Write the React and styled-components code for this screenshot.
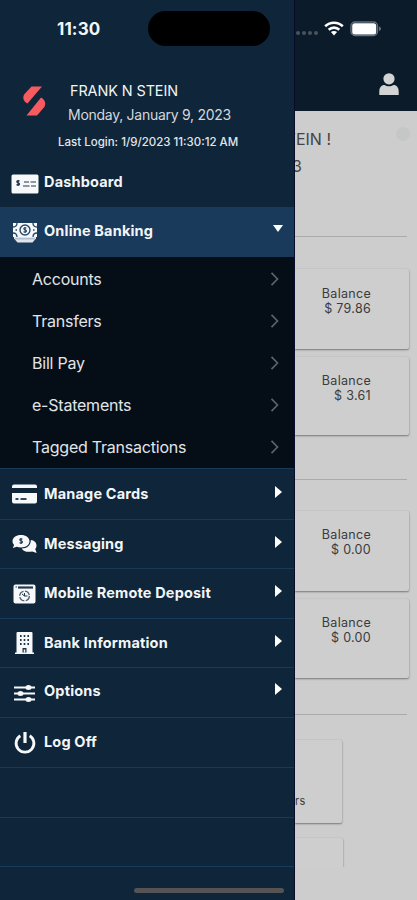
import React from "react";
import styled, { createGlobalStyle } from "styled-components";

const Global = createGlobalStyle`
  * { box-sizing: border-box; }
  body { margin: 0; background: #cdcdcd; font-family: Inter, "Liberation Sans", sans-serif; }
`;

const Screen = styled.div`
  position: relative;
  display: grid;
  grid-template-columns: 295px 1fr;
  width: 417px;
  height: 900px;
  overflow: hidden;
`;

const Drawer = styled.aside`
  display: flex;
  flex-direction: column;
  background: #0e253a;
  border-right: 1px solid #090b2b;
  color: #f3f5f7;
  min-width: 0;
  overflow: hidden;
`;

const StatusBar = styled.div`
  display: flex;
  align-items: flex-start;
  height: 78px;
  padding: 11px 0 0 57px;
`;

const Clock = styled.time`
  width: 91px;
  font-size: 17px;
  font-weight: 700;
  line-height: 36px;
  letter-spacing: 0.1px;
`;

const Island = styled.div`
  flex: none;
  width: 122px;
  height: 35px;
  border-radius: 18px;
  background: #000;
`;

const Profile = styled.header`
  display: grid;
  grid-template-columns: 68px 1fr;
  height: 51px;
`;

const LogoBox = styled.div`
  padding: 8px 0 0 23px;
  svg { display: block; }
`;

const ProfileText = styled.div`
  display: flex;
  flex-direction: column;
  white-space: nowrap;
`;

const UserName = styled.div`
  padding: 1px 0 0 2px;
  font-size: 14.4px;
  line-height: 24px;
  letter-spacing: -0.08px;
`;

const Today = styled.div`
  font-size: 14px;
  line-height: 23px;
  color: #d3d8dd;
  letter-spacing: -0.27px;
`;

const LastLogin = styled.div`
  height: 29px;
  padding-left: 58px;
  font-size: 11.5px;
  font-weight: 500;
  line-height: 27px;
  white-space: nowrap;
  color: #e2e6e9;
`;

const MenuRow = styled.div`
  flex: none;
  display: grid;
  grid-template-columns: 44px 1fr 24px;
  align-items: center;
  height: ${(p) => p.$h || 49}px;
  padding-bottom: ${(p) => p.$lift || 0}px;
  background: ${(p) => (p.$active ? "#193a5b" : "transparent")};
  border-top: ${(p) => (p.$line ? "1px solid #183a59" : "0")};
`;

const IconCell = styled.span`
  display: flex;
  justify-content: center;
  padding: ${(p) => p.$drop || 0}px 0 0 5px;
  svg { display: block; }
`;

const MenuLabel = styled.span`
  padding-bottom: 2px;
  font-size: 14.5px;
  font-weight: 700;
  letter-spacing: 0.17px;
  white-space: nowrap;
`;

const Caret = styled.span`
  display: block;
  width: 0;
  height: 0;
  border-style: solid;
  margin-bottom: 5px;
  ${(p) =>
    p.$open
      ? "margin-left: 3px; border-width: 7px 5.5px 0; border-color: #fff transparent;"
      : "margin-left: 5px; border-width: 6px 0 6px 7px; border-color: transparent #fff;"}
`;

const SubMenu = styled.nav`
  flex: none;
  display: grid;
  grid-template-rows: repeat(5, 1fr);
  height: 211px;
  padding-top: 1px;
  background: #050e17;
`;

const SubItem = styled.div`
  display: flex;
  align-items: center;
  justify-content: space-between;
  padding: 0 14px 0 32px;
  font-size: 16px;
  color: #e2e5e7;
  letter-spacing: -0.22px;
`;

const HomeBar = styled.div`
  position: absolute;
  left: 134px;
  top: 888px;
  width: 150px;
  height: 5px;
  border-radius: 3px;
  background: #555354;
`;

const Page = styled.main`
  display: flex;
  flex-direction: column;
  min-width: 0;
  overflow: hidden;
  background: #cdcdcd;
  color: #3b3b3b;
`;

const TopBar = styled.header`
  flex: none;
  height: 111px;
  background: #0b1b29;
`;

const Signals = styled.div`
  display: flex;
  align-items: center;
  gap: 6px;
  height: 57px;
  padding-left: 1px;
  svg { display: block; }
`;

const Dots = styled.div`
  display: flex;
  gap: 2px;
  padding-top: 9px;
  i { width: 4px; height: 4px; border-radius: 2px; background: #47535e; }
`;

const UserButton = styled.div`
  display: flex;
  justify-content: flex-end;
  padding: 16px 18px 0 0;
`;

const Greeting = styled.div`
  display: grid;
  grid-template-columns: 1fr 14px;
  flex: none;
  height: 125px;
  padding: 15px 7px 0 0;
`;

const GreetingText = styled.div`
  display: flex;
  justify-content: flex-end;
  width: ${(p) => p.$w}px;
  overflow: hidden;
  white-space: nowrap;
  font-size: 16px;
  line-height: 27px;
  color: #444;
`;

const Badge = styled.span`
  width: 14px;
  height: 14px;
  margin-top: 1px;
  border-radius: 50%;
  background: #c5c7c7;
`;

const Divider = styled.hr`
  flex: none;
  width: 112px;
  height: 1px;
  margin: 0;
  border: 0;
  background: #aaa;
`;

const CardGroup = styled.section`
  flex: none;
  display: flex;
  flex-direction: column;
  gap: ${(p) => p.$gap || 8}px;
  height: ${(p) => p.$h}px;
  padding-top: ${(p) => p.$top}px;
  overflow: hidden;
`;

const Card = styled.article`
  flex: none;
  width: ${(p) => p.$w || 114}px;
  height: ${(p) => p.$h || 80}px;
  padding: ${(p) => p.$pad || 17}px 38px 0 0;
  border-radius: 0 2px 2px 0;
  background: #cecece;
  box-shadow: 0 1px 2px #777, 0 0 1px #bbb;
  text-align: right;
  font-size: 12.5px;
  line-height: 15px;
  letter-spacing: 0.3px;
`;

const Caption = styled.div`
  padding-top: 37px;
  text-align: left;
  font-size: 11px;
`;

const white = "#f6f8fa";

const Svg = ({ w, h, box, children }) => (
  <svg width={w} height={h} viewBox={box || `0 0 ${w} ${h}`} fill={white}>{children}</svg>
);

const dollar = "M3 1.1C1.8.3 0 .9.4 2c.4 1 2.6.7 2.6 2S.9 5.4 0 4.6M1.6 0v6";

const CheckIcon = () => (
  <Svg w={28} h={20}>
    <rect x=".5" y=".5" width="27" height="19" rx="1.5" />
    <g stroke="#26384a" fill="none">
      <path transform="translate(5.5 6)" d={dollar} strokeWidth="1.3" />
      <path d="M13 8h5M19.5 8h5.5M12 12h6.5M20 12h5" strokeWidth="1.2" />
    </g>
  </Svg>
);

const CashIcon = () => (
  <Svg w={26} h={21}>
    <path d="M1 1h24v14H1z" />
    <path d="M2 14h22v2.500l-3.500 4h-15l-3.500-4z" opacity=".9" />
    <path d="M3 16.800h20" stroke="#8fa1b4" strokeWidth=".8" />
    <g stroke="#27486a" fill="none">
      <circle cx="13" cy="8" r="5" strokeWidth="1.4" />
      <path transform="translate(11.5 5)" d={dollar} strokeWidth="1.1" />
      <path d="M1 5c3 0 4-1.500 4-4M21 1c0 2.500 1 4 4 4M1 11c3 0 4 1.500 4 4M21 15c0-2.500 1-4 4-4" strokeWidth="1.3" />
      <path d="M3.500 8h1.500M21 8h1.500" strokeWidth="1.500" />
    </g>
  </Svg>
);

const CardIcon = () => (
  <Svg w={25} h={20}>
    <path d="M2 .5h21q2 0 2 2V4H0V2.500Q0 .5 2 .5zM0 9h25v8.500q0 2-2 2H2q-2 0-2-2z" />
    <path d="M3.500 15h3M8.500 15h6" stroke="#34485b" strokeWidth="2" />
  </Svg>
);

const ChatIcon = () => (
  <Svg w={25} h={20}>
    <path d="M9 1c5 0 8.500 2.700 8.500 6.300S14 13.500 9 13.500c-1.600 0-3-.3-4.200-.8L.8 14l1.300-3C1 9.900.5 8.700.5 7.300.5 3.700 4 1 9 1z" />
    <path d="M18.800 6c3.500.4 5.700 2.600 5.700 5.500 0 1.500-.5 2.600-1.300 3.600l1.500 4-4.500-1.700c-4.700 1.300-9-.2-10.500-2.900 5.300 0 9.300-3.500 9.100-8.500z" />
    <path transform="translate(7.500 4)" d={dollar} fill="none" stroke="#25394c" strokeWidth="1.100" />
  </Svg>
);

const DepositIcon = () => (
  <Svg w={23} h={20}>
    <rect x=".5" y=".5" width="22" height="19" rx="2" />
    <path d="M5 3.500h15" stroke="#25394c" strokeWidth="2.200" />
    <path d="M2.500 3h1.500" stroke="#25394c" />
    <circle cx="11.500" cy="12" r="4.800" fill="none" stroke="#4a5b6a" strokeWidth="1.300" strokeDasharray="6 1.500" />
    <path d="M11.500 9v3h3M9 10l2.500 2" fill="none" stroke="#25394c" />
  </Svg>
);

const BankIcon = () => (
  <Svg w={19} h={22}>
    <path d="M2.500 0h14q1 0 1 1v19.500H19V22H0v-1.500h1.500V1q0-1 1-1z" />
    <g fill="#203448">
      {[3, 7, 11].map((y) => [5, 8.7, 12.4].map((x) => <rect key={`${x}-${y}`} x={x} y={y} width="1.600" height="2" />))}
      <path d="M7.500 16h4v4.500h-4z" />
    </g>
    <path d="M9.500 17.500v3" stroke={white} strokeWidth="1.500" />
  </Svg>
);

const SlidersIcon = () => (
  <Svg w={21} h={19}>
    <path d="M0 3.500h21M0 9.500h21M0 15.500h21" stroke={white} strokeWidth="1.800" />
    <ellipse cx="14.500" cy="3.500" rx="3" ry="2.500" />
    <ellipse cx="6.500" cy="9.500" rx="3" ry="2.500" />
    <ellipse cx="14.500" cy="15.500" rx="3" ry="2.500" />
  </Svg>
);

const PowerIcon = () => (
  <Svg w={22} h={22}>
    <g fill="none" stroke={white} strokeWidth="2.800">
      <path d="M6.300 3.700a8.900 8.900 0 1 0 9.400 0" />
      <path d="M11 0v11" strokeWidth="3.200" />
    </g>
  </Svg>
);

const LogoIcon = () => (
  <svg width="23" height="30" viewBox="0 0 23 30" fill="#f75a5f">
    <path d="M8.500.5H19L4.500 17.500C0 15.500-1 11 2 7.500z" />
    <path d="M18 11.500c4.500 2.500 5.500 7 2.500 10.500l-6.500 7.500H3.500z" />
  </svg>
);

const Chevron = () => (
  <svg width="10" height="16" viewBox="0 0 10 16" fill="none" stroke="#59636b" strokeWidth="1.700">
    <path d="m1.500 1.800 6 6.200-6 6.200" />
  </svg>
);

const WifiIcon = () => (
  <svg width="20" height="15" viewBox="0 0 20 15" fill="none" stroke="#fff" strokeWidth="2.600">
    <path d="M1.200 5.300c5-4.800 12.600-4.800 17.600 0M4.700 8.800c3-2.900 7.600-2.900 10.600 0" />
    <path d="m6.900 11.100c1.800-1.500 4.400-1.500 6.200 0L10 14.500z" fill="#fff" stroke="none" />
  </svg>
);

const BatteryIcon = () => (
  <svg width="32" height="16" viewBox="0 0 32 16">
    <rect x="1" y="1" width="26.500" height="13.500" rx="4" fill="none" stroke="#66717a" strokeWidth="1.400" />
    <rect x="2.200" y="2.200" width="24" height="11.200" rx="2.500" fill="#fff" />
    <path d="M29 5.500q2 .3 2 2.300t-2 2.300z" fill="#66717a" />
  </svg>
);

const PersonIcon = () => (
  <svg width="20" height="22" viewBox="0 0 20 22" fill="#d2d3d4">
    <circle cx="10" cy="5.800" r="5.600" />
    <path d="M.3 22v-3.500c0-4 2-6.500 5.200-6.500 2.500 1.700 6.500 1.700 9 0 3.200 0 5.200 2.500 5.200 6.500V22z" />
  </svg>
);

const links = ["Accounts", "Transfers", "Bill Pay", "e-Statements", "Tagged Transactions"];

const menu = [
  { label: "Manage Cards", Icon: CardIcon, h: 51 },
  { label: "Messaging", Icon: ChatIcon, h: 49 },
  { label: "Mobile Remote Deposit", Icon: DepositIcon, h: 50 },
  { label: "Bank Information", Icon: BankIcon, h: 49 },
  { label: "Options", Icon: SlidersIcon, h: 50, lift: 3, drop: 4 },
  { label: "Log Off", Icon: PowerIcon, h: 50, plain: true },
];

const Account = ({ amount, h, pad }) => (
  <Card $h={h} $pad={pad}>
    <div>Balance</div>
    <div>{amount}</div>
  </Card>
);

export default function App() {
  return (
    <>
      <Global />
      <Screen>
        <Drawer>
          <StatusBar>
            <Clock>11:30</Clock>
            <Island />
          </StatusBar>
          <Profile>
            <LogoBox><LogoIcon /></LogoBox>
            <ProfileText>
              <UserName>FRANK N STEIN</UserName>
              <Today>Monday, January 9, 2023</Today>
            </ProfileText>
          </Profile>
          <LastLogin>Last Login: 1/9/2023 11:30:12 AM</LastLogin>
          <MenuRow $h={49}>
            <IconCell $drop={2}><CheckIcon /></IconCell>
            <MenuLabel>Dashboard</MenuLabel>
          </MenuRow>
          <MenuRow $h={50} $active $lift={2}>
            <IconCell $drop={3}><CashIcon /></IconCell>
            <MenuLabel>Online Banking</MenuLabel>
            <Caret $open />
          </MenuRow>
          <SubMenu>
            {links.map((name) => (
              <SubItem key={name}>{name}<Chevron /></SubItem>
            ))}
          </SubMenu>
          {menu.map(({ label, Icon, h, lift, drop, plain }) => (
            <MenuRow key={label} $h={h} $lift={lift} $line>
              <IconCell $drop={drop}><Icon /></IconCell>
              <MenuLabel>{label}</MenuLabel>
              {!plain && <Caret />}
            </MenuRow>
          ))}
          <MenuRow $h={50} $line />
          <MenuRow $h={49} $line />
          <MenuRow $h={34} $line />
        </Drawer>
        <Page>
          <TopBar>
            <Signals>
              <Dots><i /><i /><i /><i /></Dots>
              <WifiIcon />
              <BatteryIcon />
            </Signals>
            <UserButton><PersonIcon /></UserButton>
          </TopBar>
          <Greeting>
            <div>
              <GreetingText $w={36}>TEIN !</GreetingText>
              <GreetingText $w={7}>3</GreetingText>
            </div>
            <Badge />
          </Greeting>
          <Divider />
          <CardGroup $top={32} $h={242}>
            <Account amount="$ 79.86" />
            <Account amount="$ 3.61" h={78} pad={16} />
          </CardGroup>
          <Divider />
          <CardGroup $top={31} $h={234}>
            <Account amount="$ 0.00" pad={16} />
            <Account amount="$ 0.00" h={79} pad={16} />
          </CardGroup>
          <Divider />
          <CardGroup $top={25} $gap={15} $h={152}>
            <Card $w={47} $h={83}><Caption>rs</Caption></Card>
            <Card $w={48} $h={80} />
          </CardGroup>
        </Page>
        <HomeBar />
      </Screen>
    </>
  );
}
